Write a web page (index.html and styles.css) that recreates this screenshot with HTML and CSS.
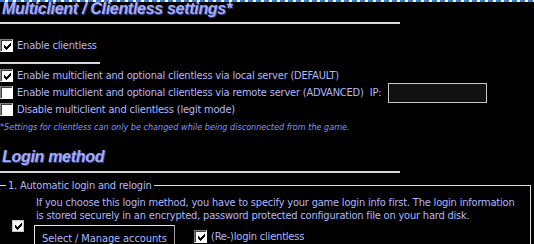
FILE: index.html
```html
<!DOCTYPE html>
<html>
<head>
    <link rel="stylesheet" href="styles.css">
</head>
<body>
    <svg class="defs" width="0" height="0">
        <symbol id="tick" viewBox="0 0 7 7">
            <rect x="0" y="2" width="1" height="3"/>
            <rect x="1" y="3" width="1" height="3"/>
            <rect x="2" y="4" width="1" height="3"/>
            <rect x="3" y="3" width="1" height="3"/>
            <rect x="4" y="2" width="1" height="3"/>
            <rect x="5" y="1" width="1" height="3"/>
            <rect x="6" y="0" width="1" height="3"/>
        </symbol>
    </svg>

    <div class="focus-line"></div>

    <h1 class="section-title">Multiclient / Clientless settings*</h1>
    <div class="rule"></div>

    <label class="check-row clientless">
        <span class="check"><svg width="7" height="7"><use href="#tick"/></svg></span>
        <span>Enable clientless</span>
    </label>
    <div class="rule short"></div>

    <div class="mode-list">
        <label class="check-row">
            <span class="check"><svg width="7" height="7"><use href="#tick"/></svg></span>
            <span>Enable multiclient and optional clientless via local server (DEFAULT)</span>
        </label>
        <label class="check-row">
            <span class="check"></span>
            <span>Enable multiclient and optional clientless via remote server (ADVANCED)</span>
            <span class="ip-label">IP:</span>
            <input type="text" class="ip-input" value="">
        </label>
        <label class="check-row">
            <span class="check"></span>
            <span>Disable multiclient and clientless (legit mode)</span>
        </label>
    </div>

    <p class="note">*Settings for clientless can only be changed while being disconnected from the game.</p>

    <h1 class="section-title login-title">Login method</h1>
    <div class="rule"></div>

    <fieldset class="group">
        <legend>1. Automatic login and relogin</legend>
        <p class="info">If you choose this login method, you have to specify your game login info first. The login information<br>is stored securely in an encrypted, password protected configuration file on your hard disk.</p>
        <div class="login-row">
            <span class="check flat"><svg width="7" height="7"><use href="#tick"/></svg></span>
            <button class="accounts-btn">Select / Manage accounts</button>
            <label class="check-row relogin">
                <span class="check"><svg width="7" height="7"><use href="#tick"/></svg></span>
                <span>(Re-)login clientless</span>
            </label>
        </div>
    </fieldset>
</body>
</html>
```

FILE: styles.css
```css
body {
    margin: 0;
    background-color: #000000;
    color: #b0b8ff;
    font-family: "DejaVu Sans Condensed", "DejaVu Sans", sans-serif;
    font-stretch: condensed;
    font-size: 11px;
    letter-spacing: -0.2px;
    overflow: hidden;
}

.defs {
    position: absolute;
}

.focus-line {
    height: 2px;
    background: repeating-linear-gradient(90deg, #3c7dd0 0 5px, #ffffff 5px 8px);
}

.section-title {
    margin: 0 0 0 2px;
    font-family: "Liberation Sans", Arial, sans-serif;
    font-stretch: normal;
    font-size: 16px;
    font-style: italic;
    font-weight: bold;
    letter-spacing: -0.3px;
    line-height: 14px;
    color: #a4acf8;
    text-shadow: 1px 1px 0 #3c4494;
}

.login-title {
    margin-top: 17px;
}

.rule {
    width: 400px;
    height: 2px;
    margin-top: 6px;
    background-color: #d8d8d8;
}

.login-title + .rule {
    margin-top: 7px;
}

.rule.short {
    width: 100px;
    margin-top: 10px;
}

.check-row {
    display: flex;
    align-items: center;
    height: 13px;
    white-space: nowrap;
}

.clientless {
    margin-top: 15px;
}

.check {
    display: flex;
    align-items: center;
    justify-content: center;
    width: 13px;
    height: 13px;
    margin-right: 4px;
    box-sizing: border-box;
    border: 1px solid;
    border-color: #808080 #ffffff #ffffff #808080;
    box-shadow: inset 1px 1px 0 #404040;
    background-color: #ffffff;
    flex: none;
}

.check svg {
    fill: #000000;
    margin: 1px 0 0 1px;
}

.check.flat {
    width: 12px;
    height: 12px;
    border: 1px solid #c8c8c8;
    box-shadow: none;
    background-color: #f4f4f4;
}

.check.flat svg {
    margin: 0;
}

.mode-list {
    display: flex;
    flex-direction: column;
    gap: 4px;
    margin-top: 5px;
}

.ip-label {
    margin-left: 6px;
}

.ip-input {
    width: 99px;
    height: 20px;
    margin: 0 0 0 7px;
    padding: 0 3px;
    box-sizing: border-box;
    border: 1px solid #c8c8c8;
    background-color: #111111;
    color: #b0b8ff;
    flex: none;
}

.note {
    margin: 6px 0 0 0;
    font-size: 9px;
    font-style: italic;
    letter-spacing: 0;
    line-height: 11px;
    color: #8494ff;
    white-space: nowrap;
}

.group {
    width: 533px;
    margin: 6px 0 0 -2px;
    padding: 0 0 40px 7px;
    box-sizing: border-box;
    border: 1px solid #e0e0e0;
}

.group legend {
    padding: 0 2px;
    line-height: 13px;
}

.info {
    margin: 4px 0 0 0;
    padding-left: 30px;
    line-height: 13px;
    white-space: nowrap;
}

.login-row {
    display: flex;
    align-items: flex-start;
    margin-top: -2px;
}

.login-row .flat {
    margin: 0 0 0 6px;
}

.accounts-btn {
    width: 141px;
    height: 26px;
    margin: 5px 0 0 10px;
    padding: 0;
    border: 1px solid;
    border-color: #e8e8e8 #a0a0a0 #a0a0a0 #e8e8e8;
    background-color: #000000;
    color: #b0b8ff;
    font-family: inherit;
    font-stretch: condensed;
    font-size: 11px;
    letter-spacing: -0.1px;
    white-space: nowrap;
}

.relogin {
    margin: 10px 0 0 19px;
}
```
